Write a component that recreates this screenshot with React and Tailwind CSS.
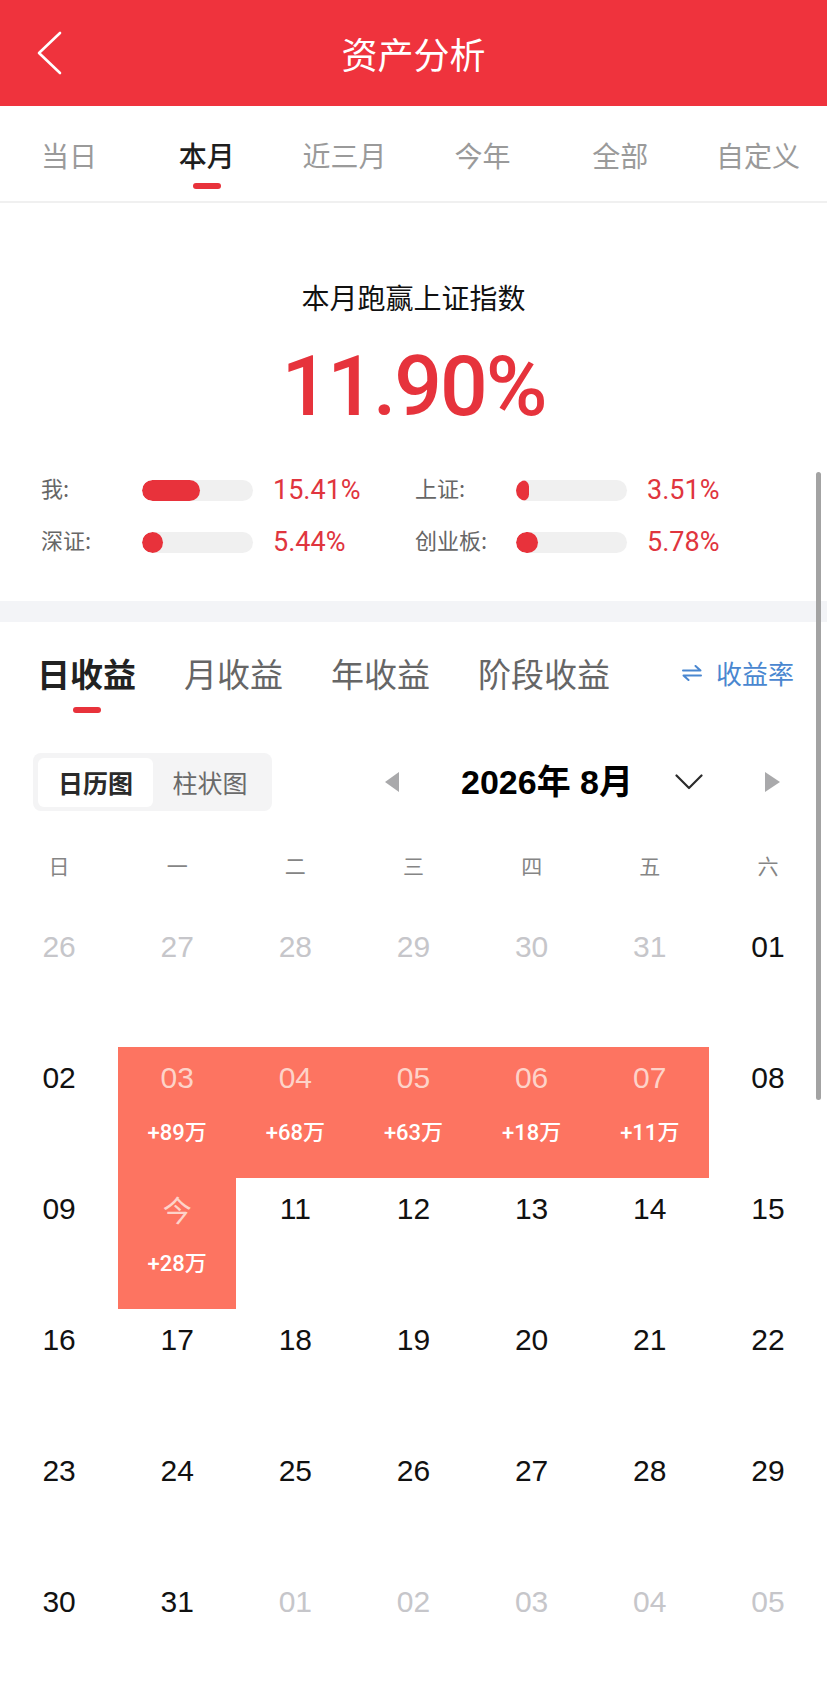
import React from "react";

const periodTabs = ["当日", "本月", "近三月", "今年", "全部", "自定义"];
const incomeTabs = ["日收益", "月收益", "年收益", "阶段收益"];
const weekDays = ["日", "一", "二", "三", "四", "五", "六"];

const stats = [
  { label: "我:", fill: 58, value: "15.41%" },
  { label: "上证:", fill: 13, value: "3.51%" },
  { label: "深证:", fill: 21, value: "5.44%" },
  { label: "创业板:", fill: 22, value: "5.78%" },
];

// muted = outside this month, amount = has daily income
const calendar = [
  [
    { d: "26", muted: true },
    { d: "27", muted: true },
    { d: "28", muted: true },
    { d: "29", muted: true },
    { d: "30", muted: true },
    { d: "31", muted: true },
    { d: "01" },
  ],
  [
    { d: "02" },
    { d: "03", amount: "+89万" },
    { d: "04", amount: "+68万" },
    { d: "05", amount: "+63万" },
    { d: "06", amount: "+18万" },
    { d: "07", amount: "+11万" },
    { d: "08" },
  ],
  [
    { d: "09" },
    { d: "今", amount: "+28万", today: true },
    { d: "11" },
    { d: "12" },
    { d: "13" },
    { d: "14" },
    { d: "15" },
  ],
  [
    { d: "16" },
    { d: "17" },
    { d: "18" },
    { d: "19" },
    { d: "20" },
    { d: "21" },
    { d: "22" },
  ],
  [
    { d: "23" },
    { d: "24" },
    { d: "25" },
    { d: "26" },
    { d: "27" },
    { d: "28" },
    { d: "29" },
  ],
  [
    { d: "30" },
    { d: "31" },
    { d: "01", muted: true },
    { d: "02", muted: true },
    { d: "03", muted: true },
    { d: "04", muted: true },
    { d: "05", muted: true },
  ],
];

const DayCell = ({ cell }) => {
  const hot = !!cell.amount;
  let color = "text-[#111111]";
  if (cell.muted) color = "text-[#c6c6ca]";
  if (hot) color = "text-[#fdd3c9]";

  return (
    <div
      className={`h-[131px] flex flex-col items-center pt-[13px] ${
        hot ? "bg-[#fd7461]" : ""
      }`}
    >
      {cell.today ? (
        <span
          className={`text-[29px] leading-[36px] ${color} font-['Noto_Sans_CJK_SC',sans-serif]`}
        >
          {cell.d}
        </span>
      ) : (
        <span className={`text-[30px] leading-[36px] ${color}`}>{cell.d}</span>
      )}
      {hot && (
        <span className="mt-[22px] text-[22px] leading-[30px] font-medium text-white font-['Roboto','Noto_Sans_CJK_SC',sans-serif]">
          {cell.amount}
        </span>
      )}
    </div>
  );
};

const App = () => {
  return (
    <div className="relative w-[827px] h-[1691px] overflow-hidden bg-white font-['Noto_Sans_CJK_SC','Liberation_Sans',sans-serif]">
      {/* Header */}
      <div className="h-[106px] bg-[#ef333d] flex items-center px-[36px]">
        <div className="w-[60px] flex items-center">
          <svg width="28" height="44" viewBox="0 0 28 44" fill="none">
            <path
              d="M24 2 L3 22 L24 42"
              stroke="white"
              strokeWidth="2.6"
              strokeLinecap="round"
              strokeLinejoin="round"
            />
          </svg>
        </div>
        <div className="flex-1 text-center text-white text-[36px] leading-[48px]">
          资产分析
        </div>
        <div className="w-[60px]" />
      </div>

      {/* Period tabs */}
      <div className="h-[97px] flex border-b-2 border-[#f0f0f0]">
        {periodTabs.map((tab) => {
          const active = tab === "本月";
          return (
            <div key={tab} className="flex-1 flex flex-col items-center pt-[29px]">
              <span
                className={`text-[28px] leading-[40px] ${
                  active ? "text-[#1d1d1d] font-medium" : "text-[#9a9a9a]"
                }`}
              >
                {tab}
              </span>
              {active && (
                <div className="mt-[8px] w-[28px] h-[6px] rounded-full bg-[#e8323b]" />
              )}
            </div>
          );
        })}
      </div>

      {/* Summary */}
      <div className="pt-[74px] pb-[39px]">
        <div className="text-center text-[28px] leading-[40px] text-[#111111]">
          本月跑赢上证指数
        </div>
        <div className="mt-[20px] text-center text-[84px] leading-[100px] tracking-[-2px] font-medium text-[#e6333c] font-['Roboto',sans-serif]">
          11.90%
        </div>
        <div className="mt-[33px] pl-[41px] grid grid-cols-[374px_374px] gap-y-[12px]">
          {stats.map((s) => (
            <div key={s.label} className="h-[40px] flex items-center">
              <span className="w-[101px] mb-[6px] text-[22px] leading-[34px] text-[#666666]">
                {s.label}
              </span>
              <div className="w-[111px] h-[21px] rounded-full bg-[#f0f0f0] overflow-hidden">
                <div
                  className="h-full rounded-full bg-[#e8323b]"
                  style={{ width: s.fill }}
                />
              </div>
              <span className="ml-[20px] text-[27px] leading-[40px] text-[#e0353e] font-['Roboto',sans-serif]">
                {s.value}
              </span>
            </div>
          ))}
        </div>
      </div>

      <div className="h-[21px] bg-[#f3f4f7]" />

      {/* Income tabs */}
      <div className="flex items-start pt-[29px] pl-[37px] pr-[33px]">
        <div className="flex gap-[48px]">
          {incomeTabs.map((tab) => {
            const active = tab === "日收益";
            return (
              <div key={tab} className="flex flex-col items-center">
                <span
                  className={`text-[33px] leading-[44px] ${
                    active ? "font-bold text-[#222222]" : "text-[#666666]"
                  }`}
                >
                  {tab}
                </span>
                {active && (
                  <div className="mt-[12px] w-[28px] h-[6px] rounded-full bg-[#e8323b]" />
                )}
              </div>
            );
          })}
        </div>
        <div className="ml-auto h-[44px] flex items-center gap-[14px] text-[#4a87d0]">
          <svg width="20" height="16" viewBox="0 0 20 16" fill="none">
            <path
              d="M1 5.5 H18.5 L13.5 1"
              stroke="#4a87d0"
              strokeWidth="2"
              strokeLinecap="round"
              strokeLinejoin="round"
            />
            <path
              d="M19 10.5 H1.5 L6.5 15"
              stroke="#4a87d0"
              strokeWidth="2"
              strokeLinecap="round"
              strokeLinejoin="round"
            />
          </svg>
          <span className="text-[26px] leading-[44px]">收益率</span>
        </div>
      </div>

      {/* Toggle + month nav */}
      <div className="mt-[40px] pl-[33px] flex items-center">
        <div className="p-[5px] pb-[4px] rounded-[8px] bg-[#f4f4f5] flex">
          <div className="w-[115px] h-[49px] rounded-[6px] bg-white flex items-center justify-center text-[25px] font-bold text-[#2a2a2a]">
            日历图
          </div>
          <div className="w-[114px] h-[49px] flex items-center justify-center text-[25px] text-[#6a6a6a]">
            柱状图
          </div>
        </div>
        <svg className="ml-[113px]" width="14" height="20" viewBox="0 0 14 20">
          <polygon points="14,0 14,20 0,10" fill="#a9a9ab" />
        </svg>
        <div className="ml-[62px] w-[214px] text-[34px] leading-[44px] font-bold text-black font-['Liberation_Sans','Noto_Sans_CJK_SC',sans-serif]">
          2026年 8月
        </div>
        <svg width="28" height="16" viewBox="0 0 28 16" fill="none">
          <path
            d="M1.5 1.5 L14 14 L26.5 1.5"
            stroke="#2b2b2b"
            strokeWidth="2.2"
            strokeLinecap="round"
            strokeLinejoin="round"
          />
        </svg>
        <svg className="ml-[62px]" width="15" height="20" viewBox="0 0 15 20">
          <polygon points="0,0 0,20 15,10" fill="#a9a9ab" />
        </svg>
      </div>

      {/* Week header */}
      <div className="mt-[35px] grid grid-cols-7 h-[40px] items-center">
        {weekDays.map((w) => (
          <div key={w} className="text-center text-[21px] text-[#858585]">
            {w}
          </div>
        ))}
      </div>

      {/* Calendar grid */}
      <div className="mt-[30px] grid grid-cols-7 font-['Liberation_Sans','Noto_Sans_CJK_SC',sans-serif]">
        {calendar.map((row, r) =>
          row.map((cell, c) => <DayCell key={`${r}-${c}`} cell={cell} />)
        )}
      </div>

      {/* scroll indicator */}
      <div className="absolute left-[816px] top-[472px] w-[5px] h-[628px] rounded-full bg-[#a3a3a3]" />
    </div>
  );
};

export default App;
